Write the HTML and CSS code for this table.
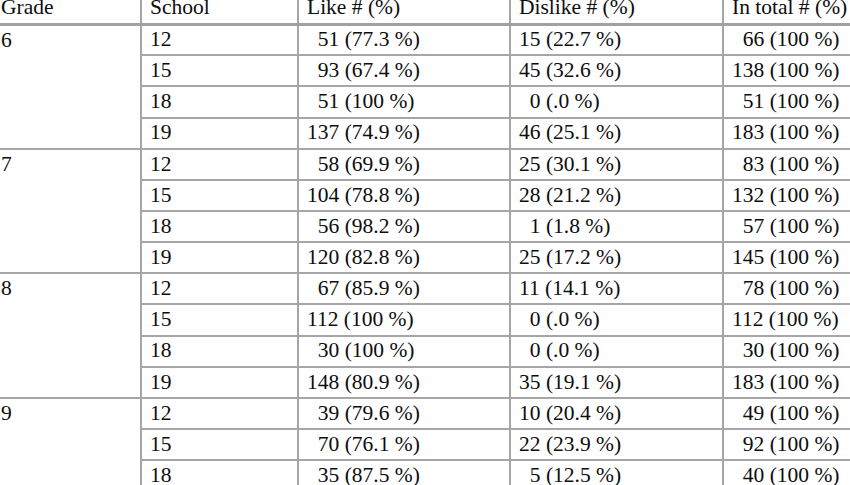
FILE: index.html
```html
<!DOCTYPE html>
<html lang="en">
<head>
<meta charset="utf-8">
<title>Like / Dislike by grade and school</title>
<link rel="stylesheet" href="styles.css">
</head>
<body>
<table class="data">
  <colgroup>
    <col class="c-grade"><col class="c-school"><col class="c-like"><col class="c-dislike"><col class="c-total">
  </colgroup>
  <thead>
    <tr><th>Grade</th><th>School</th><th>Like # (%)</th><th>Dislike # (%)</th><th>In total # (%)</th></tr>
  </thead>
  <tbody>
    <tr><td class="grade" rowspan="4">6</td><td>12</td><td><span class="p1">51 (77.3 %)</span></td><td>15 (22.7 %)</td><td><span class="p1">66 (100 %)</span></td></tr>
    <tr><td>15</td><td><span class="p1">93 (67.4 %)</span></td><td>45 (32.6 %)</td><td>138 (100 %)</td></tr>
    <tr><td>18</td><td><span class="p1">51 (100 %)</span></td><td><span class="p1">0 (.0 %)</span></td><td><span class="p1">51 (100 %)</span></td></tr>
    <tr><td>19</td><td>137 (74.9 %)</td><td>46 (25.1 %)</td><td>183 (100 %)</td></tr>

    <tr><td class="grade" rowspan="4">7</td><td>12</td><td><span class="p1">58 (69.9 %)</span></td><td>25 (30.1 %)</td><td><span class="p1">83 (100 %)</span></td></tr>
    <tr><td>15</td><td>104 (78.8 %)</td><td>28 (21.2 %)</td><td>132 (100 %)</td></tr>
    <tr><td>18</td><td><span class="p1">56 (98.2 %)</span></td><td><span class="p1">1 (1.8 %)</span></td><td><span class="p1">57 (100 %)</span></td></tr>
    <tr><td>19</td><td>120 (82.8 %)</td><td>25 (17.2 %)</td><td>145 (100 %)</td></tr>

    <tr><td class="grade" rowspan="4">8</td><td>12</td><td><span class="p1">67 (85.9 %)</span></td><td>11 (14.1 %)</td><td><span class="p1">78 (100 %)</span></td></tr>
    <tr><td>15</td><td>112 (100 %)</td><td><span class="p1">0 (.0 %)</span></td><td>112 (100 %)</td></tr>
    <tr><td>18</td><td><span class="p1">30 (100 %)</span></td><td><span class="p1">0 (.0 %)</span></td><td><span class="p1">30 (100 %)</span></td></tr>
    <tr><td>19</td><td>148 (80.9 %)</td><td>35 (19.1 %)</td><td>183 (100 %)</td></tr>

    <tr><td class="grade" rowspan="3">9</td><td>12</td><td><span class="p1">39 (79.6 %)</span></td><td>10 (20.4 %)</td><td><span class="p1">49 (100 %)</span></td></tr>
    <tr><td>15</td><td><span class="p1">70 (76.1 %)</span></td><td>22 (23.9 %)</td><td><span class="p1">92 (100 %)</span></td></tr>
    <tr><td>18</td><td><span class="p1">35 (87.5 %)</span></td><td><span class="p1">5 (12.5 %)</span></td><td><span class="p1">40 (100 %)</span></td></tr>
  </tbody>
</table>
</body>
</html>
```

FILE: styles.css
```css
html, body {
  margin: 0;
  padding: 0;
  background: #ffffff;
  overflow: hidden;
}

body {
  font-family: "Liberation Serif", "Times New Roman", serif;
  font-size: 21.5px;
  color: #0d0d0d;
}

.data {
  border-collapse: collapse;
  table-layout: fixed;
  width: 880px;
  margin-top: -7px;
}

.c-grade { width: 141px; }
.c-school { width: 157px; }
.c-like { width: 212px; }
.c-dislike { width: 213px; }
.c-total { width: 157px; }

.data th,
.data td {
  height: 31.15px;
  padding: 0 0 0 8px;
  box-sizing: border-box;
  text-align: left;
  vertical-align: middle;
  white-space: nowrap;
  font-weight: normal;
  line-height: 1;
  border-left: 2px solid #a6a6a6;
  border-bottom: 2px solid #a6a6a6;
}

.data th {
  border-bottom: 3px solid #a0a0a0;
}

.data th:first-child,
.data td.grade {
  border-left: none;
  padding-left: 1px;
}

.data td.grade {
  vertical-align: top;
  padding-top: 4px;
}

.p1 {
  padding-left: 1ch;
}
```
